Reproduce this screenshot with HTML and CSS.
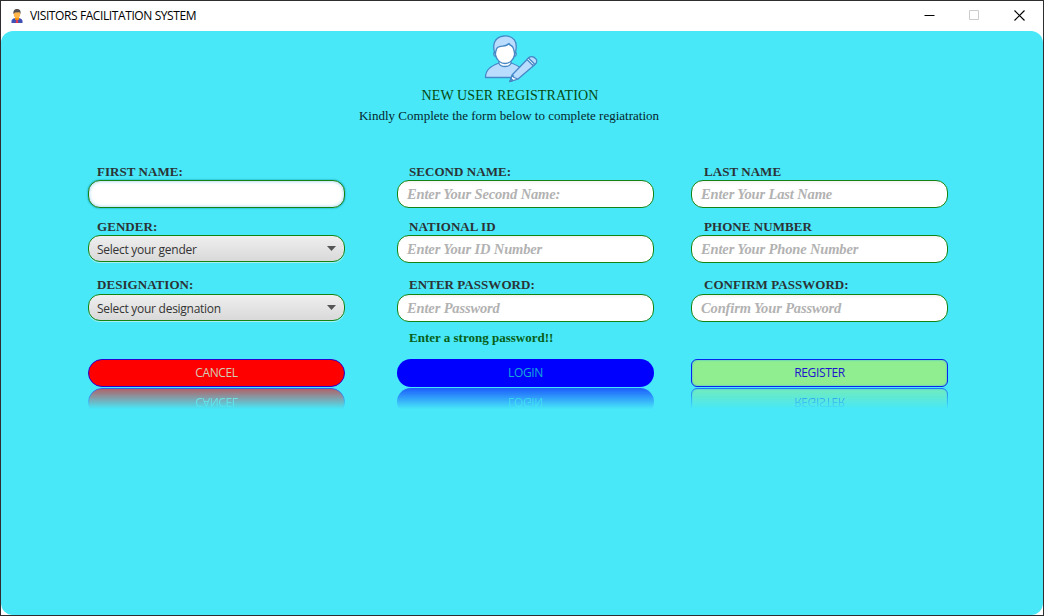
FILE: index.html
```html
<!DOCTYPE html>
<html lang="en">
<head>
<meta charset="utf-8">
<title>VISITORS FACILITATION SYSTEM</title>
<link rel="stylesheet" href="styles.css">
</head>
<body>
<div class="window">
  <header class="titlebar">
    <svg class="app-icon" width="12" height="14" viewBox="0 0 12 14">
      <path d="M.5 14v-2c0-1.500 1.500-2.500 3-2.800h5c1.500.3 3 1.300 3 2.800v2z" fill="#3f51b5"/>
      <path d="M4 8h4v2.500l-2 1-2-1z" fill="#ff9800"/>
      <path d="M5.300 10.800h1.400l.6 3.200H4.700z" fill="#e53950"/>
      <ellipse cx="6" cy="5" rx="3.300" ry="4" fill="#ffb74d"/>
      <path d="M2.500 5C2 1.500 3.500 0 6 0c3 0 4 1.700 3.500 5L8.500 3.200 4 3.400z" fill="#575052"/>
    </svg>
    <span class="app-title">VISITORS FACILITATION SYSTEM</span>
    <div class="controls">
      <svg width="11" height="11" viewBox="0 0 11 11"><path d="M.5 5.500h10" stroke="#000"/></svg>
      <svg width="11" height="11" viewBox="0 0 11 11"><path d="M.5.5h9v9h-9z" fill="none" stroke="#ccc"/></svg>
      <svg width="11" height="11" viewBox="0 0 11 11"><path d="M.5.5l10 10M10.500.5l-10 10" stroke="#000" stroke-width="1.150"/></svg>
    </div>
  </header>
  <main class="content">
    <div class="heading">
      <svg class="user-icon" width="54" height="48" viewBox="0 0 54 48">
        <g fill="#b9dcff" stroke="#4788c7" stroke-width="1.300" stroke-linejoin="round">
          <path d="M1.500 42.500C1.500 34.500 7 31 15 28h12c4 1.300 7 2.500 9.500 5L27 42.500z"/>
          <path d="M15 25v3.500c2 4 10 4 12 0V25z" fill="#fff"/>
          <path d="M11.200 17.500c-2-1-2.200 3.500.7 4.500M30.800 17.500c2-1 2.200 3.500-.7 4.500" fill="#fff"/>
          <path d="M11.500 13v7c1 5 5 8.500 9.500 8.500s8.500-3.500 9.500-8.500v-7l-6-4-11 2z" fill="#fff"/>
          <path d="M11 19c-3-9-1-17 9-18 9-.5 15 5 11 18-1-3-1-5-2.500-7.500-1-1.500-2.500-1-3.500-3-3 4-8 1.500-11.500 4C12 14 12 16.500 11 19z"/>
          <path d="M26 46.500l2.500-7L44.500 23c2-2 5-1.500 7 .5s1.500 4-.5 6L34 44z"/>
          <path d="M26 46.500l2.500-7 1.500 3 4 1.500z" fill="#fff"/>
          <path d="M43 24.500l6 6 1.500-1.500-6-6z" fill="#fff"/>
          <path d="M26 46.500l1-3 2 2z" fill="#4788c7"/>
        </g>
      </svg>
      <div class="form-title">NEW USER REGISTRATION</div>
      <div class="subtitle">Kindly Complete the form below to complete regiatration</div>
    </div>
    <div class="form">
      <section class="column">
        <label class="first"><span>FIRST NAME:</span></label>
        <div class="field focused"></div>
        <label><span>GENDER:</span></label>
        <div class="combo"><span>Select your gender</span><i class="arrow"></i></div>
        <label class="third"><span>DESIGNATION:</span></label>
        <div class="combo"><span>Select your designation</span><i class="arrow"></i></div>
        <div class="message"></div>
        <div class="button cancel"><span>CANCEL</span></div>
        <div class="reflection" aria-hidden="true"><div class="button cancel"><span>CANCEL</span></div></div>
      </section>
      <section class="column second">
        <label class="first"><span>SECOND NAME:</span></label>
        <div class="field"><span>Enter Your Second Name:</span></div>
        <label><span>NATIONAL ID</span></label>
        <div class="field"><span>Enter Your ID Number</span></div>
        <label class="third"><span>ENTER PASSWORD:</span></label>
        <div class="field"><span>Enter Password</span></div>
        <div class="message"><span>Enter a strong password!!</span></div>
        <div class="button login"><span>LOGIN</span></div>
        <div class="reflection" aria-hidden="true"><div class="button login"><span>LOGIN</span></div></div>
      </section>
      <section class="column last">
        <label class="first"><span>LAST NAME</span></label>
        <div class="field"><span>Enter Your Last Name</span></div>
        <label><span>PHONE NUMBER</span></label>
        <div class="field"><span>Enter Your Phone Number</span></div>
        <label class="third"><span>CONFIRM PASSWORD:</span></label>
        <div class="field"><span>Confirm Your Password</span></div>
        <div class="message"></div>
        <div class="button register"><span>REGISTER</span></div>
        <div class="reflection" aria-hidden="true"><div class="button register"><span>REGISTER</span></div></div>
      </section>
    </div>
  </main>
</div>
</body>
</html>
```
FILE: styles.css
```css
* { box-sizing: border-box; }
body { margin: 0; font-family: "Open Sans", "Noto Sans", sans-serif; overflow: hidden; }
.window {
  width: 1044px; height: 616px;
  border: 1px solid #2f2d30;
  background: #fff;
  display: flex; flex-direction: column;
}
.titlebar { height: 30px; display: flex; align-items: center; padding: 0 17px 1px 10px; }
.app-icon { margin-right: 7px; }
.app-title { font-size: 12px; letter-spacing: -.4px; white-space: nowrap; color: #000; }
.controls { margin-left: auto; display: flex; gap: 34px; padding-right: 1px; }
.controls svg { display: block; }
.content { flex: 1; background: #48e8f8; border-radius: 12px; }
.heading {
  height: 129px; padding: 4px 26px 0 0;
  display: flex; flex-direction: column; align-items: center;
  font-family: "Liberation Serif", serif; white-space: nowrap;
}
.user-icon { display: block; margin-left: 3px; flex: none; }
.form-title { margin: 3px 0 0 2px; height: 20px; line-height: 20px; font-size: 14px; letter-spacing: .1px; color: #064b10; }
.subtitle { height: 20px; line-height: 20px; font-size: 13px; color: #05262c; }
.form { display: flex; padding-left: 87px; }
.column { width: 257px; display: flex; flex-direction: column; }
.second { margin-left: 52px; }
.last { margin-left: 37px; }
label, .message {
  height: 27px; padding: 11px 0 0 9px; white-space: nowrap;
  font: bold 13px/15px "Liberation Serif", serif; letter-spacing: .05px; color: #2b3336;
}
.second label, .message { padding-left: 12px; }
.last label { padding-left: 13px; }
label.first { height: 20px; padding-top: 4px; }
label.third { height: 31px; padding-top: 14px; }
.field {
  height: 28px; border: 1px solid #138413; border-radius: 12px;
  background: linear-gradient(#f3f3f3, #fff 4px);
  padding-left: 9px; white-space: nowrap;
  font: italic bold 14.500px/27px "Liberation Serif", serif; letter-spacing: -.14px; color: #b2b2b2;
}
.focused { background: #fff; box-shadow: 0 0 2px #088a96, inset 0 0 3px 1px #b9dff5; }
.combo {
  height: 27px; margin-bottom: 1px; padding: 0 8px; border: 1px solid #138413; border-radius: 12px;
  background: linear-gradient(#efefef, #d9d9d9); box-shadow: 0 1px 0 #a8f0ef;
  display: flex; align-items: center; justify-content: space-between;
  font-size: 12px; letter-spacing: -.27px; color: #333; white-space: nowrap;
}
.combo span { padding-top: 1px; }
.arrow { width: 9px; height: 5px; background: #555; clip-path: polygon(0 0, 100% 0, 50% 100%); }
.message { height: 37px; padding-top: 8px; letter-spacing: 0; color: #075f18; }
.button {
  height: 28px; padding-bottom: 2px; display: flex; align-items: center; justify-content: center;
  font-size: 12px; letter-spacing: -.35px; white-space: nowrap; flex: none;
}
.cancel { background: #f00; border: 1px solid #2b00d0; border-radius: 14px; color: #d2cdb5; }
.login { background: #00f; border-radius: 14px; color: #16a8d8; }
.register { background: #90ee90; border: 1px solid #0825f0; border-radius: 6px; color: #2015cf; box-shadow: inset 0 0 2px #28a8f8; }
.reflection {
  height: 21px; margin-top: 1px; overflow: hidden;
  -webkit-mask-image: linear-gradient(rgba(0,0,0,.6), transparent);
  mask-image: linear-gradient(rgba(0,0,0,.6), transparent);
}
.reflection .button { transform: scaleY(-1); }
```
